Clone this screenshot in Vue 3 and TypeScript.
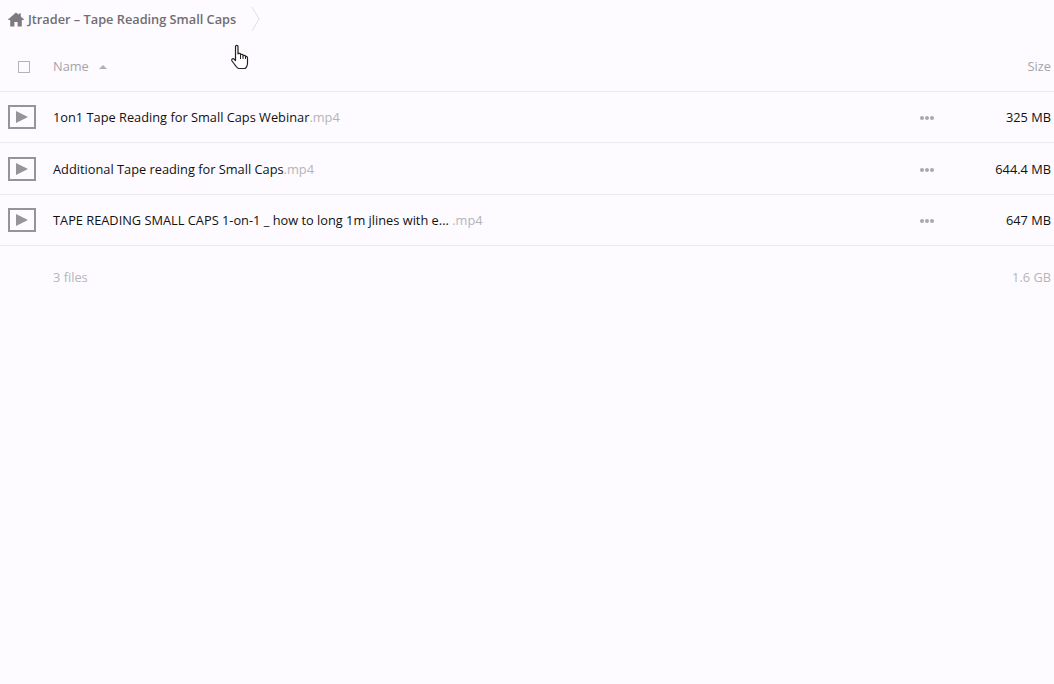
<script setup lang="ts">
interface FileRow {
  name: string;
  ext: string;
  size: string;
}

const files: FileRow[] = [
  { name: '1on1 Tape Reading for Small Caps Webinar', ext: '.mp4', size: '325 MB' },
  { name: 'Additional Tape reading for Small Caps', ext: '.mp4', size: '644.4 MB' },
  { name: 'TAPE READING SMALL CAPS 1-on-1 _ how to long 1m jlines with e...', ext: ' .mp4', size: '647 MB' },
];
</script>

<template>
  <div class="page">
    <nav class="crumb">
      <svg class="home" width="16" height="15" viewBox="0 0 16 15" aria-hidden="true">
        <path d="M8 0.5 L10.8 2.8 V1.5 H12.8 V4.5 L16 7.4 V8 H13.8 V14.5 H9.6 V10 H6.4 V14.5 H2.2 V8 H0 V7.4 Z" fill="#7d7b80" />
      </svg>
      <span class="crumb-text">Jtrader – Tape Reading Small Caps</span>
      <svg class="chev" width="9" height="26" viewBox="0 0 9 26" aria-hidden="true">
        <path d="M1 1 L8 13 L1 25" fill="none" stroke="#dfdee1" stroke-width="1" />
      </svg>
    </nav>

    <header class="head">
      <span class="check"></span>
      <span class="head-name">Name</span>
      <span class="sort"></span>
      <span class="head-size">Size</span>
    </header>

    <div v-for="f in files" :key="f.name" class="row">
      <span class="thumb"><span class="play"></span></span>
      <span class="name">{{ f.name }}<span class="ext">{{ f.ext }}</span></span>
      <span class="dots"><i></i><i></i><i></i></span>
      <span class="size">{{ f.size }}</span>
    </div>

    <footer class="foot">
      <span>3 files</span>
      <span>1.6 GB</span>
    </footer>

    <svg class="cursor" width="20" height="26" viewBox="0 0 20 26" aria-hidden="true">
      <path
        d="M5.5 2.5 C5.5 1 8 1 8 2.5 V10 C8 9 10.5 9 10.5 10 V11 C10.5 10 13 10 13 11 V12 C13 11 15.5 11 15.5 12.5 C16 12 17.5 12.5 17.5 14 V19 C17.5 22 16 24.5 14.5 24.5 H9 C7 24.5 6.5 22.5 5 21 L2 17 C1 15.5 2.5 14 4 15 L5.5 16.5 Z"
        fill="#fff"
        stroke="#222"
        stroke-width="1.2"
        stroke-linejoin="round"
      />
      <path d="M10.5 11 V15 M13 12 V15 M15.5 12.5 V15" stroke="#222" stroke-width="1" fill="none" />
    </svg>
  </div>
</template>

<style>
html,
body {
  margin: 0;
  background: #fdfbff;
}
</style>

<style scoped>
.page {
  position: relative;
  width: 1054px;
  height: 684px;
  overflow: hidden;
  background: #fdfbff;
  font-family: "Open Sans", "Noto Sans", sans-serif;
  font-size: 12.8px;
  color: #111;
}
.crumb {
  display: flex;
  align-items: center;
  height: 38px;
  padding-left: 8px;
}
.home {
  flex: none;
  margin-right: 4px;
}
.crumb-text {
  font-weight: 600;
  font-size: 12.75px;
  color: #6f6e72;
}
.chev {
  margin-left: 15px;
}
.head {
  display: flex;
  align-items: center;
  height: 54px;
  padding: 4px 3px 0 18px;
  border-bottom: 1px solid #ebeaec;
  box-sizing: border-box;
  color: #a5a4a8;
}
.head-name,
.head-size {
  margin-bottom: 2px;
}
.check {
  width: 10px;
  height: 10px;
  border: 1px solid #b3b2b6;
  margin-right: 23px;
}
.sort {
  width: 0;
  height: 0;
  margin-left: 10px;
  margin-top: 1px;
  border-left: 4px solid transparent;
  border-right: 4px solid transparent;
  border-bottom: 4px solid #b0afb3;
}
.head-size {
  margin-left: auto;
}
.row {
  display: flex;
  align-items: center;
  height: 51.3px;
  padding: 0 3px 0 8px;
  border-bottom: 1px solid #ebeaec;
  box-sizing: border-box;
}
.head + .row + .row {
  padding-top: 1px;
}
.thumb {
  display: flex;
  align-items: center;
  justify-content: center;
  width: 28px;
  height: 24px;
  border: 2px solid #959497;
  box-sizing: border-box;
  margin-right: 17px;
  flex: none;
}
.play {
  width: 0;
  height: 0;
  border-top: 6px solid transparent;
  border-bottom: 6px solid transparent;
  border-left: 12px solid #959497;
}
.name {
  flex: 1;
  white-space: pre;
}
.ext {
  color: #b6b5b9;
}
.dots {
  display: flex;
  gap: 1px;
  margin-top: 2px;
}
.dots i {
  width: 4px;
  height: 4px;
  border-radius: 50%;
  background: #a9a8ac;
}
.size {
  width: 117px;
  text-align: right;
}
.foot {
  display: flex;
  justify-content: space-between;
  padding: 22px 3px 0 53px;
  color: #b6b5b9;
}
.cursor {
  position: absolute;
  left: 230px;
  top: 44px;
}
</style>
